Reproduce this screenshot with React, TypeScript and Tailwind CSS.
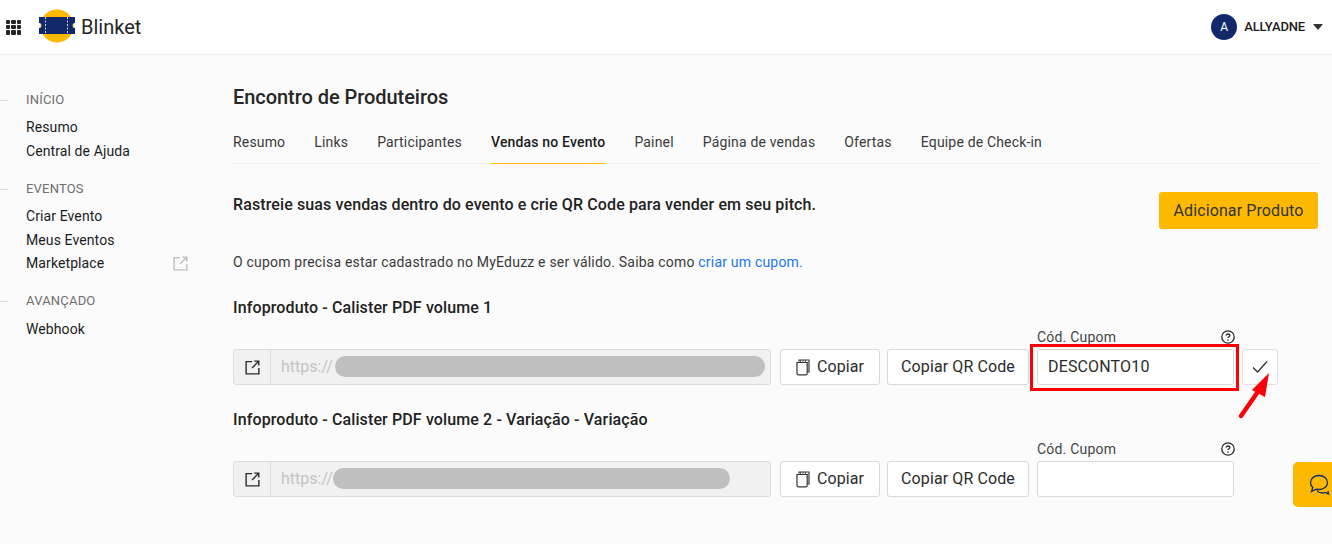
import React from "react";

const ExternalIcon = ({ className }: { className: string }) => (
  <svg viewBox="0 0 16 16" fill="none" stroke="currentColor" strokeWidth="1.5" className={className}>
    <path d="M7.5 1.7H1.200v13.100h13.600V8.500" />
    <path d="M7.500 8.500 14.300 1.700M9.800 1.200h4.900v4.600" />
  </svg>
);

const CopyIcon = () => (
  <svg viewBox="0 0 14 17" fill="none" stroke="#333" strokeWidth="1.2" className="w-[14px] h-[17px]">
    <path d="M3 2.500V1h10v12h-1.500" />
    <path d="M4.500 1v2M7 1v2M9.500 1v2" strokeWidth="0.8" />
    <path d="M1 3.500h10.200v10.800c0 .9-.6 1.500-1.400 1.500H2.400c-.8 0-1.400-.6-1.400-1.500z" />
  </svg>
);

const Help = () => (
  <svg viewBox="0 0 14 14" className="w-[14px] h-[14px]" fill="none" stroke="#2b2b2b" strokeWidth="1.3">
    <circle cx="7" cy="7" r="6.200" />
    <path d="M5.200 5.600c0-1 .8-1.600 1.800-1.600s1.800.6 1.800 1.500c0 1.300-1.800 1.300-1.800 2.600" />
    <path d="M7 9.500v1.200" />
  </svg>
);

const SideGroup = ({ title, items, titleGap }: { title: string; items: string[]; titleGap: string }) => (
  <div className="mb-[16px]">
    <div className={`flex items-center h-[20px] ${titleGap}`}>
      <div className="w-[8px] h-px bg-[#d9d9d9] mr-[18px]" />
      <span className="text-[13px] tracking-[0.2px] text-[#6f6f6f]">{title}</span>
    </div>
    {items.map((item) => (
      <div
        key={item}
        className={`flex items-center justify-between pl-[26px] pr-[12px] text-[14px] tracking-[0.1px] text-[#1c1c1c] ${
          item === "Marketplace" ? "h-[23px]" : "h-[24px]"
        }`}
      >
        <span>{item}</span>
        {item === "Marketplace" && <ExternalIcon className="w-[15px] h-[15px] text-[#bdbdbd]" />}
      </div>
    ))}
  </div>
);

const tabs = ["Resumo", "Links", "Participantes", "Vendas no Evento", "Painel", "Página de vendas", "Ofertas", "Equipe de Check-in"];

const Btn = ({ children, w }: { children: React.ReactNode; w: string }) => (
  <button className={`${w} h-[36px] flex items-center justify-center gap-[7px] bg-white border border-[#d9d9d9] rounded-[3px] text-[16px] tracking-[0.1px] text-[#2b2b2b]`}>
    {children}
  </button>
);

const ProductRow = ({
  title, pill, value, check, extraTop,
}: { title: string; pill: string; value?: string; check?: boolean; extraTop: string }) => (
  <section className={extraTop}>
    <h3 className="text-[16px] leading-[24px] font-medium tracking-[0.12px] text-[#222]">{title}</h3>
    <div className="flex items-end mt-[5px]">
      <div className="w-[538px] h-[36px] flex border border-[#dcdcdc] rounded-[3px] bg-[#f1f1f1]">
        <div className="w-[37px] border-r border-[#dcdcdc] flex items-center justify-center text-[#2b2b2b]">
          <ExternalIcon className="w-[15px] h-[15px]" />
        </div>
        <div className="relative flex-1 pl-[10px] flex items-center text-[16px] text-[#c4c4c4] overflow-hidden">
          https://
          <div className={`absolute top-[6px] h-[21px] rounded-full bg-[#bfbfbf] ${pill}`} />
        </div>
      </div>
      <div className="ml-[9px]">
        <Btn w="w-[100px]"><CopyIcon /><span>Copiar</span></Btn>
      </div>
      <div className="ml-[7px]">
        <Btn w="w-[142px]">Copiar QR Code</Btn>
      </div>
      <div className="ml-[8px] w-[197px]">
        <div className="flex items-center justify-between h-[24px] text-[14px] tracking-[0.2px] text-[#444]">
          <span>Cód. Cupom</span>
          <span className="mr-[-1px]"><Help /></span>
        </div>
        <div className="h-[36px] bg-white border border-[#d9d9d9] rounded-[3px] px-[10px] flex items-center text-[16px] tracking-[0.15px] text-[#2b2b2b]">
          {value}
        </div>
      </div>
      {check && (
        <div className="ml-[8px] w-[36px] h-[36px] bg-white border border-[#e0e0e0] rounded-[3px] flex items-center justify-center">
          <svg viewBox="0 0 16 14" className="w-[16px] h-[14px]" fill="none" stroke="#333" strokeWidth="1.3">
            <path d="M1 7.500 5.600 12 15 1.500" />
          </svg>
        </div>
      )}
    </div>
  </section>
);

export default function App() {
  return (
    <div className="relative w-[1332px] h-[544px] overflow-hidden bg-[#fbfbfb] font-['Roboto',sans-serif]">
      <header className="h-[55px] bg-white border-b border-[#f0f0f0] flex items-center pl-[6px] pr-[9px]">
        <div className="grid grid-cols-3 gap-[1px] w-[15px] h-[15px]">
          {Array.from({ length: 9 }).map((_, i) => (
            <div key={i} className="bg-[#262626] rounded-[1px]" />
          ))}
        </div>
        <svg viewBox="0 0 36 34" className="w-[36px] h-[34px] ml-[18px] mb-[2px]">
          <circle cx="18" cy="17" r="16.500" fill="#fdb900" />
          <path d="M0 8h36v6a2.500 2.500 0 0 0 0 5v6H0v-6a2.500 2.500 0 0 0 0-5z" fill="#11296b" />
          <path d="M6.500 8v17M28.500 8v17" stroke="#cfd6e6" strokeWidth="1" strokeDasharray="2 1.500" />
        </svg>
        <span className="ml-[6px] text-[20px] text-[#262626]">Blinket</span>
        <div className="ml-auto flex items-center">
          <div className="w-[26px] h-[26px] rounded-full bg-[#11296b] text-white text-[12px] flex items-center justify-center">A</div>
          <span className="ml-[7px] text-[13px] tracking-[-0.15px] font-medium text-[#1c1c1c]">ALLYADNE</span>
          <div className="ml-[8px] w-0 h-0 border-l-[5.500px] border-r-[5.500px] border-t-[6px] border-l-transparent border-r-transparent border-t-[#333]" />
        </div>
      </header>

      <div className="flex">
        <aside className="w-[233px] shrink-0 pt-[35px] pr-[33px]">
          <SideGroup titleGap="mb-[5px]" title="INÍCIO" items={["Resumo", "Central de Ajuda"]} />
          <SideGroup titleGap="mb-[5px]" title="EVENTOS" items={["Criar Evento", "Meus Eventos", "Marketplace"]} />
          <SideGroup titleGap="mb-[6px]" title="AVANÇADO" items={["Webhook"]} />
        </aside>

        <main className="w-[1085px] pt-[28px]">
          <h1 className="text-[20px] leading-[28px] font-medium tracking-[-0.05px] text-[#262626]">Encontro de Produteiros</h1>
          <nav className="mt-[17px] h-[36px] flex gap-[29px] border-b border-[#f0f0f0]">
            {tabs.map((t) => (
              <div
                key={t}
                className={`h-[36px] pt-[3px] text-[14px] leading-[22px] tracking-[0.17px] ${
                  t === "Vendas no Evento"
                    ? "font-medium text-[#1c1c1c] border-b border-[#fdb900]"
                    : "text-[#3a3a3a]"
                }`}
              >
                {t}
              </div>
            ))}
          </nav>
          <div className="flex justify-between items-start mt-[28px]">
            <p className="mt-[1px] text-[16px] leading-[24px] font-medium tracking-[0.115px] text-[#222]">
              Rastreie suas vendas dentro do evento e crie QR Code para vender em seu pitch.
            </p>
            <button className="w-[159px] h-[37px] bg-[#fdb900] rounded-[3px] text-[16px] tracking-[0.1px] text-[#333]">Adicionar Produto</button>
          </div>
          <p className="mt-[22px] text-[14px] leading-[22px] tracking-[0.2px] text-[#3a3a3a]">
            O cupom precisa estar cadastrado no MyEduzz e ser válido. Saiba como{" "}
            <span className="text-[#2277e6]">criar um cupom.</span>
          </p>
          <ProductRow extraTop="mt-[23px]" title="Infoproduto - Calister PDF volume 1" pill="left-[64px] w-[430px]" value="DESCONTO10" check />
          <ProductRow extraTop="mt-[23px]" title="Infoproduto - Calister PDF volume 2 - Variação - Variação" pill="left-[62px] w-[397px]" />
        </main>
      </div>

      {/* annotation */}
      <div className="absolute left-[1030px] top-[344px] w-[209px] h-[47px] border-[3px] border-[#fb0007]" />
      <svg viewBox="0 0 40 50" className="absolute left-[1236px] top-[370px] w-[40px] h-[50px]">
        <path d="M5 46 21 23" stroke="#fb0007" strokeWidth="4.500" strokeLinecap="round" />
        <path d="M33 3 16 20 29 27z" fill="#fb0007" />
      </svg>

      {/* chat */}
      <div className="absolute left-[1293px] top-[462px] w-[50px] h-[45px] bg-[#fdb900] rounded-[5px] flex items-center pl-[16px]">
        <svg viewBox="0 0 24 22" className="w-[24px] h-[22px]" fill="none" stroke="#11296b" strokeWidth="1.300">
          <path d="M10 1.500c4.700 0 8.500 3 8.500 7s-3.800 7-8.500 7c-1 0-2-.1-2.800-.4L2.500 17.500l1.300-4C2.300 12.300 1.500 10.500 1.500 8.500c0-4 3.800-7 8.500-7z" />
          <path d="M8 16.500c1 1.500 3 2.500 5.500 2.500 1 0 2-.2 2.800-.5l3.200 1.500-.6-3" />
        </svg>
      </div>
    </div>
  );
}
